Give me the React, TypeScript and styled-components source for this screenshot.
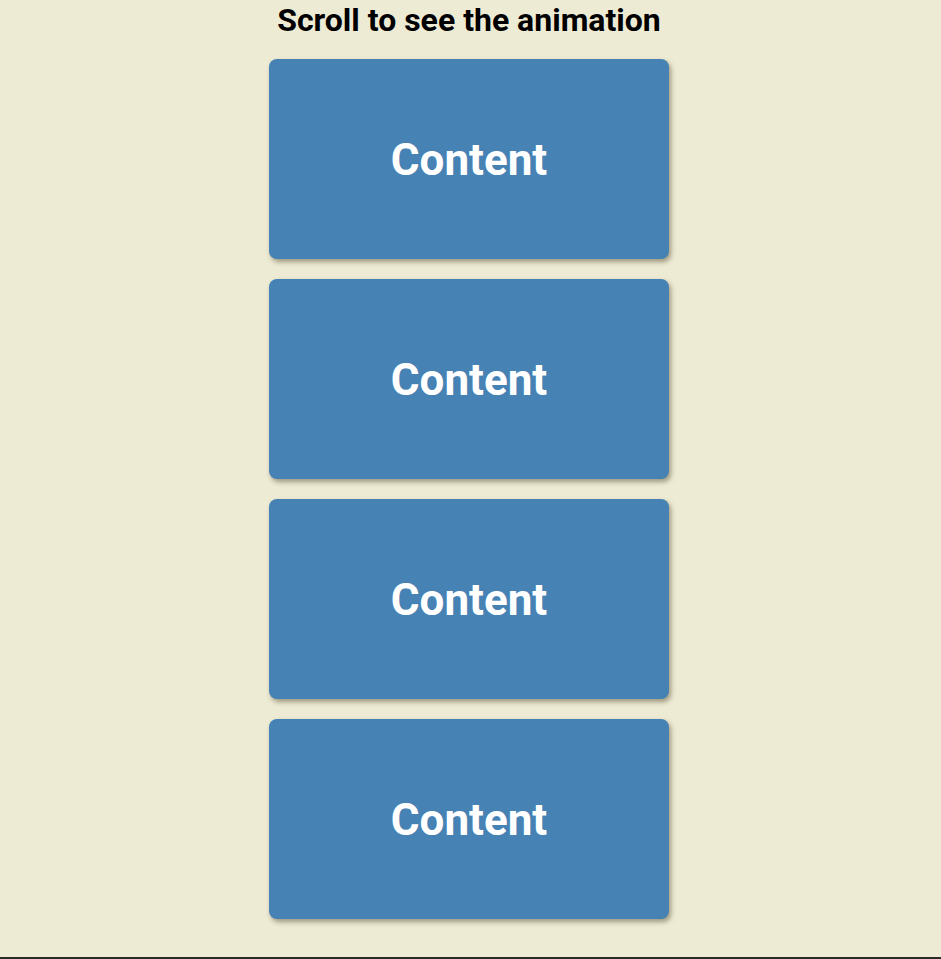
import React from "react";
import styled, { createGlobalStyle } from "styled-components";

const Global = createGlobalStyle`
  html, body { margin: 0; padding: 0; }
  body {
    background: #eeebd5;
    font-family: Roboto, "Liberation Sans", sans-serif;
  }
`;

const Page = styled.div`
  min-height: 100vh;
  display: flex;
  flex-direction: column;
  align-items: center;
  padding-right: 3px;
  box-sizing: border-box;
`;

const Title = styled.h1`
  margin: 1px 0 0;
  font-size: 32px;
  line-height: 38px;
  font-weight: 700;
  color: #000;
  text-align: center;
`;

const List = styled.div`
  display: flex;
  flex-direction: column;
  gap: 20px;
  margin-top: 20px;
`;

const Card = styled.div`
  width: 400px;
  height: 200px;
  box-sizing: border-box;
  padding-top: 2px;
  background: #4682b4;
  border-radius: 8px;
  box-shadow: 2px 3px 5px rgba(60, 50, 20, 0.45);
  display: flex;
  align-items: center;
  justify-content: center;
  color: #fff;
  font-size: 44px;
  font-weight: 700;
`;

const BottomBar = styled.div`
  margin-top: auto;
  align-self: stretch;
  margin-right: -3px;
  height: 2px;
  background: #2a2a28;
`;

export default function App() {
  return (
    <>
      <Global />
      <Page>
        <Title>Scroll to see the animation</Title>
        <List>
          {[0, 1, 2, 3].map((i) => (
            <Card key={i}>Content</Card>
          ))}
        </List>
        <BottomBar />
      </Page>
    </>
  );
}
